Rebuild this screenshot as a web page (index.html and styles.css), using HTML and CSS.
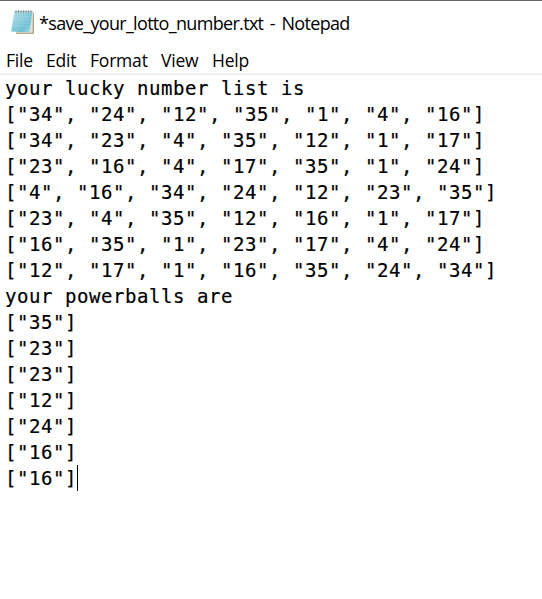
FILE: index.html
```html
<!DOCTYPE html>
<html lang="en">
<head>
<meta charset="utf-8">
<title>save_your_lotto_number.txt - Notepad</title>
<link rel="stylesheet" href="styles.css">
</head>
<body>
<div class="window">
<header class="titlebar">
<svg class="icon" width="26" height="28" viewBox="0 0 26 28" aria-hidden="true">
<defs>
<linearGradient id="page" x1="0" y1="0" x2="1" y2="1">
<stop offset="0" stop-color="#b5dfe8"/><stop offset=".45" stop-color="#8acbdc"/><stop offset=".7" stop-color="#70bfd4"/><stop offset="1" stop-color="#b8e3ec"/>
</linearGradient>
</defs>
<path d="M6 3h17.500v21.500H6z" fill="#e6dfd0"/>
<path d="M6 24.300h17.300V4" fill="none" stroke="#a5926f" stroke-width="1.100"/>
<path d="M4.500 2.500H22.800L20 23.500 1 22.500z" fill="url(#page)"/>
<path d="M22.800 3 20 23.500" fill="none" stroke="#d7edf0" stroke-width=".8"/>
<path d="M4 8h17M3.500 11h16.500M3 14h16.500M2.500 17h16.500" stroke="#a8dbe5" stroke-width=".5"/>
<path d="M5 3h17.800" stroke="#c2d5d8" stroke-width="2"/>
<path d="M6 1.500v2M8.500 1.500v2M11 1.500v2M13.500 1.500v2M16 1.500v2M18.500 1.500v2M21 1.500v2" stroke="#66808a" stroke-width="1.200"/>
</svg>
<span class="title">*save_your_lotto_number.txt - Notepad</span>
</header>
<nav class="menu"><span class="file">File</span><span class="edit">Edit</span><span class="format">Format</span><span class="view">View</span><span class="help">Help</span></nav>
<main class="editor"><pre>your lucky number list is
["34", "24", "12", "35", "1", "4", "16"]
["34", "23", "4", "35", "12", "1", "17"]
["23", "16", "4", "17", "35", "1", "24"]
["4", "16", "34", "24", "12", "23", "35"]
["23", "4", "35", "12", "16", "1", "17"]
["16", "35", "1", "23", "17", "4", "24"]
["12", "17", "1", "16", "35", "24", "34"]
your powerballs are
["35"]
["23"]
["23"]
["12"]
["24"]
["16"]
["16"]<span class="caret"></span></pre></main>
</div>
</body>
</html>
```
FILE: styles.css
```css
* { box-sizing: border-box; }
body { margin: 0; background: #fff; color: #000; }
.window { height: 599px; border-top: 1px solid #6b6869; overflow: hidden; }
.titlebar { display: flex; height: 47px; padding: 8px 0 0 10px; }
.icon { flex: none; }
.title { margin-left: 3px; font: 18px/28px "Open Sans", sans-serif; letter-spacing: -.68px; word-spacing: 2.500px; white-space: nowrap; }
.menu { display: flex; height: 27px; padding-left: 6px; border-bottom: 2px solid #f0f0f0; font: 17.500px/25px "Open Sans", sans-serif; letter-spacing: -.2px; }
.menu span { flex: none; white-space: nowrap; }
.file { width: 40px; }
.edit { width: 44px; }
.format { width: 71px; }
.view { width: 51px; }
.editor { padding: 0 0 0 5px; }
pre { margin: 0; font: 19px/26px "DejaVu Sans Mono", monospace; letter-spacing: .56px; -webkit-text-stroke: .2px #000; }
.caret { display: inline-block; width: 1px; height: 26px; background: #000; vertical-align: top; }
```
